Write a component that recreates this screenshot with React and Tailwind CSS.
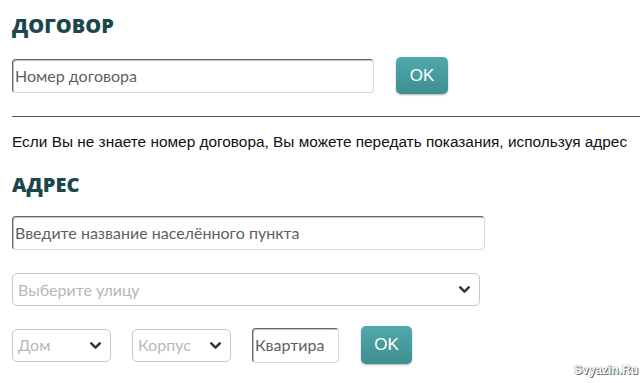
import { ChevronDown } from "lucide-react";

function Select({ label, className }) {
  return (
    <div
      className={`flex items-center justify-between h-[33px] border border-[#c8c8c8] rounded-[5px] bg-white pl-[5px] pr-[6px] ${className}`}
    >
      <span className="text-[16px] text-[#b8b8b8] font-['Lato',sans-serif]">{label}</span>
      <ChevronDown size={17} strokeWidth={3.5} className="text-[#333]" />
    </div>
  );
}

function Input({ placeholder, className }) {
  return (
    <div
      className={`flex items-center h-[34px] border border-[#d8d8d8] border-t-[#666] border-l-[#666] rounded-[4px] bg-white pl-[2px] shadow-[inset_1px_1px_1px_rgba(0,0,0,0.25)] ${className}`}
    >
      <span className="text-[16px] text-[#5f5f5f] font-['Lato',sans-serif]">{placeholder}</span>
    </div>
  );
}

function OkButton({ className }) {
  return (
    <button
      className={`h-[37px] rounded-[5px] bg-gradient-to-b from-[#50a9aa] to-[#3e8f90] text-white text-[17px] font-['Liberation_Sans',sans-serif] shadow-[0_1px_2px_rgba(0,0,0,0.3)] ${className}`}
    >
      OK
    </button>
  );
}

export default function App() {
  return (
    <div className="relative w-[640px] h-[383px] bg-white overflow-hidden font-['Liberation_Sans',sans-serif]">
      <div className="pl-[12px] pt-[13px]">
        <h1 className="text-[20px] leading-[26px] font-extrabold text-[#1b474c] font-['Open_Sans',sans-serif]">
          ДОГОВОР
        </h1>
        <div className="flex items-center gap-[22px] mt-[18px]">
          <Input placeholder="Номер договора" className="w-[362px]" />
          <OkButton className="w-[52px]" />
        </div>
      </div>
      <div className="ml-[12px] mt-[22px] border-t border-[#555]" />
      <p className="pl-[12px] mt-[16px] text-[15.4px] leading-[18px] text-[#111]">
        Если Вы не знаете номер договора, Вы можете передать показания, используя адрес
      </p>
      <div className="pl-[12px]">
        <h2 className="mt-[21px] text-[20px] leading-[26px] font-extrabold text-[#1b474c] font-['Open_Sans',sans-serif]">
          АДРЕС
        </h2>
        <Input placeholder="Введите название населённого пункта" className="w-[473px] mt-[18px]" />
        <Select label="Выберите улицу" className="w-[468px] mt-[23px]" />
        <div className="flex items-center mt-[20px]">
          <Select label="Дом" className="w-[99px]" />
          <Select label="Корпус" className="w-[99px] ml-[21px]" />
          <Input placeholder="Квартира" className="w-[87px] ml-[21px] h-[35px]" />
          <OkButton className="w-[51px] ml-[22px] h-[38px]" />
        </div>
      </div>
      <div className="absolute right-[2px] bottom-[4px] text-[12px] font-bold text-white font-['Liberation_Sans',sans-serif] [text-shadow:0_0_1px_#444,1px_1px_0_#777]">
        Svyazin.Ru
      </div>
    </div>
  );
}
